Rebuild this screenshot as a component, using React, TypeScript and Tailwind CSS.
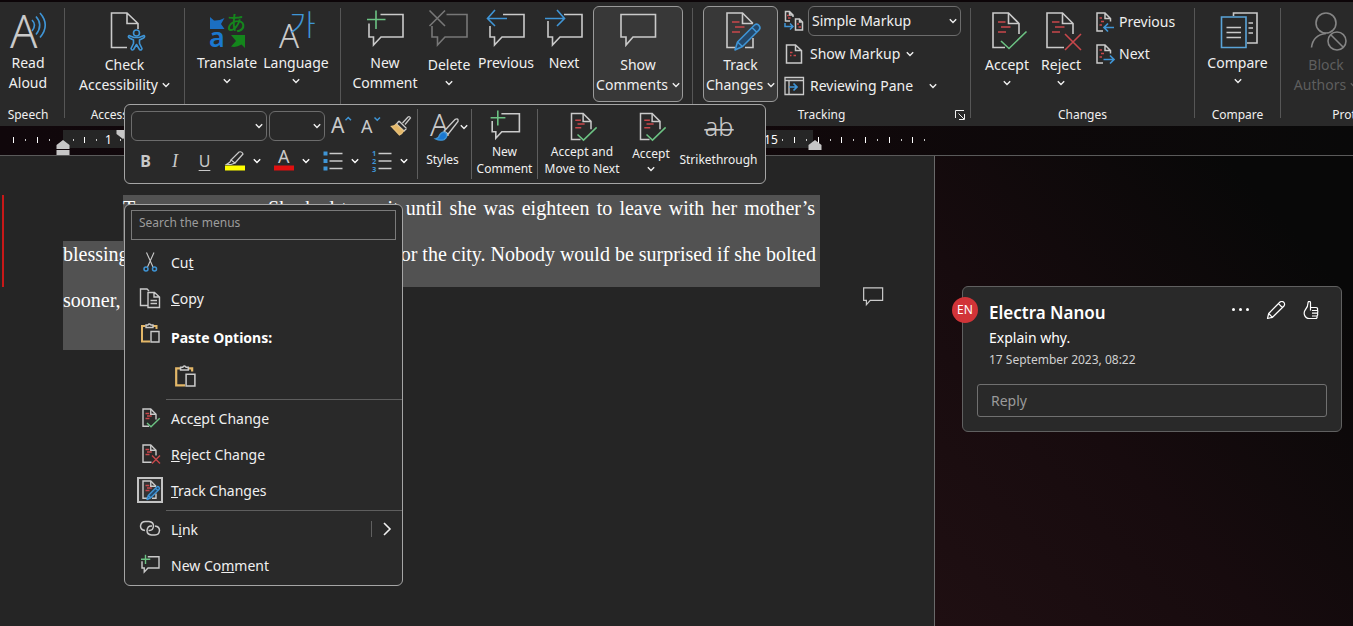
import { useState, type ReactNode } from "react";

type IconProps = { className?: string; sw?: number };

const GREY = "#cacaca";
const BLUE = "#3f95d6";
const GREEN = "#6cc283";
const RED = "#c8474b";

function Svg({ className = "size-10", children, sw = 1.6, color = GREY }: IconProps & { children: ReactNode; color?: string }) {
    return (
        <svg className={`${className} shrink-0 overflow-visible`} viewBox="0 0 40 40" fill="none" stroke={color} strokeWidth={sw} aria-hidden="true">
            {children}
        </svg>
    );
}

function Chevron({ className = "" }: { className?: string }) {
    return (
        <svg className={`h-2 w-2 shrink-0 ${className}`} viewBox="0 0 8 8" fill="none" stroke="currentColor" strokeWidth="1.4" aria-hidden="true">
            <path d="M0.8 2.3 4 5.5 7.2 2.3" />
        </svg>
    );
}

/* ---------- large ribbon icons ---------- */

function ReadAloudIcon() {
    return (
        <Svg>
            <text x="2" y="37" fontSize="45" fontWeight="300" fontFamily="Noto Sans, sans-serif" fill={GREY} stroke="none">A</text>
            <g stroke={BLUE}>
                <path d="M24 9Q29 14 24 20" />
                <path d="M28 5.500Q35.500 14 28 23.500" />
                <path d="M32 2Q42.500 14 32 26.500" />
            </g>
        </Svg>
    );
}

function AccessibilityIcon() {
    return (
        <Svg>
            <path d="M22 36.500H6.500V2H22L33 12.500V18M22 2V12.500H33" />
            <g stroke={BLUE} strokeLinejoin="round">
                <circle cx="31.500" cy="22" r="3" />
                <path d="M24 24.500Q22.500 26 24.500 27L28.500 29V32.500L26 37.500Q27 40 28.500 38.500L31.500 33.500 34.500 38.500Q36.500 40 37 37.500L34.500 32.500V29L38.500 27Q40.500 25.500 39 24.500L34 26.500H29Z" />
            </g>
        </Svg>
    );
}

function TranslateIcon() {
    return (
        <Svg>
            <g stroke="none">
                <path fill="#1b6fc2" d="M3 6 7 9.500Q12 10 17.500 7L14 13 17.500 18H3Z" />
                <text x="2" y="36" fontSize="27" fontWeight="600" fontFamily="Noto Sans, sans-serif" fill="#1b78d0">a</text>
                <text x="19" y="20" fontSize="20" fontWeight="500" fontFamily="Noto Sans CJK JP, sans-serif" fill="#14861c">あ</text>
                <path fill="#14861c" d="M24 24H38V37L34.500 33.500Q29 37 24 35.500L29 30Z" />
            </g>
        </Svg>
    );
}

function LanguageIcon() {
    return (
        <Svg>
            <g stroke="none" fontWeight="300">
                <text x="3" y="37" fontSize="33" fontFamily="Noto Sans, sans-serif" fill={GREY}>A</text>
                <text x="13" y="25" fontSize="29" fontFamily="Noto Sans CJK KR, sans-serif" fill={BLUE}>가</text>
            </g>
        </Svg>
    );
}

function NewCommentIcon(p: IconProps) {
    return (
        <Svg {...p}>
            <path d="M15.500 3.500H38V26H16L8.500 34V26H4V12.500" />
            <path stroke={GREEN} d="M11-.5V18M2 8.500H20.500" />
        </Svg>
    );
}

function DeleteCommentIcon() {
    return (
        <Svg color="#777">
            <path d="M17.500 3.500H38V26H16L8.500 34V26H3V15" />
            <path d="M.5-.5 16 15M16-.5.5 15" />
        </Svg>
    );
}

function PreviousCommentIcon() {
    return (
        <Svg>
            <path d="M17 3.500H38V26H16L8.500 34V26H4V15" />
            <path stroke={BLUE} d="M9-1 1.500 7.500 9 15M1.500 7.500H21" />
        </Svg>
    );
}

function NextCommentIcon() {
    return (
        <Svg>
            <path d="M20 3.500H38V26H16L8.500 34V26H4V10" />
            <path stroke={BLUE} d="M13-1 20.500 7.500 13 15M1 7.500H20.500" />
        </Svg>
    );
}

function CommentIcon(p: IconProps) {
    return (
        <Svg {...p}>
            <path d="M3 3.500H37.500V26H15L8 34V26H3Z" />
        </Svg>
    );
}

function MarkedPage({ open }: { open: string }) {
    return (
        <>
            <path d={open} />
            <path d="M21.500 2V12.500H32" />
            <path stroke={RED} d="M11 11H18.500M14 16H23.500M11 21H19" />
        </>
    );
}

function AcceptIcon(p: IconProps) {
    return (
        <Svg {...p}>
            <MarkedPage open="M18 36.500H6V2H21.500L32 12.500V23" />
            <path stroke={GREEN} d="M14 30 22 37.500 39.500 20.500" />
        </Svg>
    );
}

function RejectIcon(p: IconProps) {
    return (
        <Svg {...p}>
            <MarkedPage open="M23 36.500H6V2H21.500L32 12.500V23" />
            <path stroke={RED} d="M24 23 40 39M40 23 24 39" />
        </Svg>
    );
}

function TrackIcon(p: IconProps) {
    return (
        <Svg {...p}>
            <MarkedPage open="M14 36.500H6V2H21.500L32 12.500M32 27V36.500H24" />
            <path stroke={BLUE} fill="#24486a" strokeLinejoin="round" d="M14 39 16.500 31 33.500 14Q36 12 38 14.500 40 17 38 19L21.500 35.500ZM16.500 31 21.500 35.500M31 16.500 35.500 21" />
        </Svg>
    );
}

function CompareIcon() {
    return (
        <Svg>
            <path d="M15.500 5V2H39V32H29M30.500 12H35M30.500 17H35M30.500 22H35" />
            <path stroke="#5aa4d8" d="M3.500 6H28V36.500H3.500Z" />
            <path d="M8.500 16.500H23M8.500 21.500H23M8.500 26.500H23" />
        </Svg>
    );
}

function BlockIcon() {
    return (
        <Svg color="#858585">
            <circle cx="20" cy="12" r="10" />
            <path d="M5.500 36.500Q7 24 20 22.500" />
            <circle cx="31" cy="30" r="9" />
            <path d="M24.500 23.500 37.500 36.500" />
        </Svg>
    );
}

/* ---------- small icons ---------- */

function MarkupIcon() {
    return (
        <Svg className="size-5" sw={3}>
            <path d="M12 20H3V1H11L18 8V12M11 1V8H18M37 38H23V16H31L37 22ZM31 16V22H37" />
            <path stroke={RED} d="M6 9H10M8 14H13M26 26H30M29 32H34" />
            <path stroke={BLUE} d="M2 24V31H18M12 25 18 31 12 37" />
        </Svg>
    );
}

function ShowMarkupIcon() {
    return (
        <Svg className="size-5" sw={3}>
            <path d="M5 2H23L35 13V38H5ZM23 2V13H35" />
            <path stroke={RED} d="M12 17H17M19 23H24M12 23H15" />
        </Svg>
    );
}

function PaneIcon() {
    return (
        <Svg className="size-5" sw={2.6}>
            <path d="M2 3H39V37H2ZM2 9H39M10 9V37" />
            <path stroke={BLUE} strokeWidth="3.400" d="M10 22H26M19 15 26 22 19 29" />
        </Svg>
    );
}

function StepIcon({ back }: { back?: boolean }) {
    return (
        <Svg className="size-5" sw={3}>
            <path d="M16 38H4V2H20L31 13V19M20 2V13H31" />
            <path stroke={RED} d="M9 12H14M12 19H18M9 26H14" />
            <path stroke={BLUE} strokeWidth="3.400" d={back ? "M38 31H19M26 23 18 31 26 39" : "M17 31H37M30 23 38 31 30 39"} />
        </Svg>
    );
}

function CutIcon() {
    return (
        <Svg className="size-5" sw={2.2}>
            <path d="M13 1 26 30M28 1 15 30" />
            <g stroke={BLUE} strokeWidth="3">
                <circle cx="12" cy="34" r="4" />
                <circle cx="29" cy="34" r="4" />
            </g>
        </Svg>
    );
}

function CopyIcon() {
    return (
        <Svg className="size-5" sw={2.8}>
            <path d="M15 35H1V2H14L18 6M16 9H29L39 18V39H16ZM28 9V18H39M21 25H34M21 31H34" />
        </Svg>
    );
}

function PasteIcon({ className = "size-5" }: IconProps) {
    return (
        <Svg className={className} sw={2.8}>
            <path stroke="#e3b768" strokeWidth="4" d="M11 6H4V37H20M26 6H33V12" />
            <path d="M12 4H16Q18 0 22 4H26V9H12ZM22 17H38V38H22Z" />
        </Svg>
    );
}

function LinkIcon() {
    return (
        <Svg className="size-5" sw={3}>
            <path d="M10 23Q1 22 1 14 2 5 11 5H18Q27 6 27 14 26 23 19 23H17" />
            <path d="M30 14Q39 15 39 23 38 32 30 32H23Q14 31 14 23 15 14 22 14H24" />
        </Svg>
    );
}

function PainterIcon() {
    return (
        <Svg className="size-5" sw={2.6}>
            <path d="M23 14 34 2Q37 0 39 4L28 17M16 10 31 25M31 25 26 30 11 16 16 10" />
            <path fill="#e3b768" stroke="#e8c27c" d="M10 17Q7 20 1 21L17 38Q22 36 25 30Z" />
        </Svg>
    );
}

function StylesIcon() {
    return (
        <Svg className="size-7">
            <text x="0" y="33" fontSize="44" fontWeight="300" fontFamily="Noto Sans, sans-serif" fill={GREY} stroke="none">A</text>
            <path fill="#292929" strokeWidth="2" d="M20 26 36 9Q41 7 40 12L26 30Z" />
            <path fill="#1b78d0" stroke={BLUE} strokeWidth="2" d="M8 37Q13 36 14 31 18 25 23 29 26 34 20 38 14 40 8 37Z" />
        </Svg>
    );
}

function HighlightIcon() {
    return (
        <Svg className="size-5" sw={2.4}>
            <path d="M12 18 28 2Q34 0 36 6L20 24M12 18 20 24 12 27H3L10 22Z" />
            <path stroke="#ffff00" strokeWidth="10" d="M0 34H40" />
        </Svg>
    );
}

function FontColorIcon() {
    return (
        <Svg className="size-5">
            <text x="8" y="24" fontSize="36" fontFamily="Noto Sans, sans-serif" fill={GREY} stroke="none">A</text>
            <path stroke="#e01010" strokeWidth="10" d="M0 34H40" />
        </Svg>
    );
}

function ListIcon({ numbered }: { numbered?: boolean }) {
    return (
        <Svg className="size-5" sw={2.6}>
            <path d="M13 5H39M13 20H39M13 35H39" />
            {numbered ? (
                <g stroke="none" fill={BLUE} fontSize="15" fontWeight="700" fontFamily="Noto Sans, sans-serif">
                    <text x="0" y="10">1</text>
                    <text x="0" y="25">2</text>
                    <text x="0" y="41">3</text>
                </g>
            ) : (
                <path stroke={BLUE} strokeWidth="8" d="M1 5H9M1 20H9M1 35H9" />
            )}
        </Svg>
    );
}

function StrikeIcon() {
    return (
        <Svg className="size-7">
            <text x="20" y="33" textAnchor="middle" fontSize="36" fontWeight="300" fontFamily="Noto Sans, sans-serif" fill={GREY} stroke="none">ab</text>
            <path strokeWidth="2.400" d="M-1 24H41" />
        </Svg>
    );
}

/* ---------- ribbon ---------- */

type BigButtonProps = {
    icon: ReactNode;
    lines: string[];
    width: string;
    split?: boolean;
    menu?: boolean;
    pressed?: boolean;
    disabled?: boolean;
};

function BigButton({ icon, lines, width, split, menu, pressed, disabled }: BigButtonProps) {
    return (
        <button
            type="button"
            disabled={disabled}
            aria-pressed={pressed}
            className={`flex h-24 shrink-0 flex-col items-center rounded-md border pt-1 text-sm leading-5 whitespace-nowrap ${width} ${pressed ? "border-[#9a9a9a] bg-[#383838]" : "border-transparent"} ${disabled ? "text-[#5e5e5e]" : ""}`}
        >
            <span className={split ? "h-11" : "h-[42px]"}>{icon}</span>
            {lines.map((line, i) => (
                <span key={line} className="flex items-center gap-1">
                    {line}
                    {menu && i === lines.length - 1 && lines.length > 1 && <Chevron />}
                </span>
            ))}
            {menu && lines.length === 1 && <Chevron className="mt-1" />}
        </button>
    );
}

function Group({ label, width, children, launcher }: { label: string; width: string; children: ReactNode; launcher?: boolean }) {
    return (
        <>
            <section aria-label={label} className={`flex shrink-0 flex-col ${width}`}>
                <div className="flex h-24">{children}</div>
                <div className="flex h-6 items-center pt-0.5 text-xs">
                    <span className={`flex-1 text-center ${launcher ? "pr-1" : ""}`}>{label}</span>
                    {launcher && (
                        <button type="button" aria-label="Change Tracking Options" className="flex w-4 items-center">
                            <svg className="size-3" viewBox="0 0 12 12" fill="none" stroke="currentColor" aria-hidden="true">
                                <path d="M1.500 9V1.500H10M4.500 4.500 10 10M10.500 5V10.500H5" />
                            </svg>
                        </button>
                    )}
                </div>
            </section>
            <div className="mt-0.5 h-[110px] w-px shrink-0 bg-[#565656]" />
        </>
    );
}

function Ribbon() {
    return (
        <header className="flex h-[126px] overflow-hidden border-t-2 border-[#0c0508] bg-[#292929] pt-1">
            <Group label="Speech" width="w-16 pr-2">
                <BigButton icon={<ReadAloudIcon />} lines={["Read", "Aloud"]} width="w-full" />
            </Group>
            <Group label="Accessibility" width="w-[119px]">
                <BigButton icon={<AccessibilityIcon />} lines={["Check", "Accessibility"]} width="w-full" split menu />
            </Group>
            <Group label="Language" width="w-[155px] px-2">
                <BigButton icon={<TranslateIcon />} lines={["Translate"]} width="w-[68px]" menu />
                <BigButton icon={<LanguageIcon />} lines={["Language"]} width="w-[70px]" menu />
            </Group>
            <Group label="Comments" width="w-[351px] px-2">
                <BigButton icon={<NewCommentIcon />} lines={["New", "Comment"]} width="w-[72px]" />
                <BigButton icon={<DeleteCommentIcon />} lines={["Delete"]} width="w-[56px]" split menu />
                <BigButton icon={<PreviousCommentIcon />} lines={["Previous"]} width="w-[58px]" />
                <BigButton icon={<NextCommentIcon />} lines={["Next"]} width="w-[58px]" />
                <BigButton icon={<CommentIcon />} lines={["Show", "Comments"]} width="w-[90px]" split menu pressed />
            </Group>
            <Group label="Tracking" width="w-[277px]" launcher>
                <div className="pl-2.5">
                    <BigButton icon={<TrackIcon />} lines={["Track", "Changes"]} width="w-[75px]" split menu pressed />
                </div>
                <div className="flex flex-1 flex-col pr-[9px] pl-1.5 text-sm">
                    <label className="flex h-8 items-start gap-1">
                        <span className="flex h-[30px] items-center"><MarkupIcon /></span>
                        <span className="relative flex-1">
                            <select aria-label="Display for Review" className="h-[30px] w-full appearance-none rounded-md border border-[#6c6c6c] bg-[#292929] pl-[3px]">
                                <option>Simple Markup</option>
                            </select>
                            <Chevron className="pointer-events-none absolute top-[11px] right-1" />
                        </span>
                    </label>
                    <button type="button" className="flex h-8 items-center gap-1.5">
                        <ShowMarkupIcon />
                        Show Markup
                        <Chevron />
                    </button>
                    <button type="button" className="flex h-8 items-center gap-1.5">
                        <PaneIcon />
                        Reviewing Pane
                        <Chevron className="ml-2.5" />
                    </button>
                </div>
            </Group>
            <Group label="Changes" width="w-[223px]">
                <div className="flex pl-[9px]">
                    <BigButton icon={<AcceptIcon />} lines={["Accept"]} width="w-[54px]" split menu />
                    <BigButton icon={<RejectIcon />} lines={["Reject"]} width="w-[54px]" split menu />
                </div>
                <div className="flex flex-col pl-[7px] text-sm">
                    <button type="button" className="flex h-8 items-center gap-1"><StepIcon back />Previous</button>
                    <button type="button" className="flex h-8 items-center gap-1"><StepIcon />Next</button>
                </div>
            </Group>
            <Group label="Compare" width="w-[85px]">
                <BigButton icon={<CompareIcon />} lines={["Compare"]} width="w-full" menu />
            </Group>
            <Group label="Protect" width="w-[143px]">
                <BigButton icon={<BlockIcon />} lines={["Block", "Authors"]} width="w-[90px]" split menu disabled />
            </Group>
        </header>
    );
}

/* ---------- ruler ---------- */

function Tick({ index }: { index: number }) {
    const cm = index / 4;
    if (index === 0) return null;
    if (cm === 1 || cm === 15) return <span className="text-xs text-white">{cm}</span>;
    return <span className={index % 2 === 0 ? "h-1.5 w-px bg-white" : "h-0.5 w-px bg-[#c8c8c8]"} />;
}

function Ruler() {
    const ticks = Array.from({ length: 78 }, (_, i) => i - 4);
    return (
        <div className="relative h-[30px] overflow-hidden border-b border-[#5a5a5a] bg-linear-to-r from-[#10070b] via-[#12080b] to-[#090909] pt-1">
            <div className="flex h-[18px]">
                <div className="w-[63px]" />
                <div className="w-[750px] bg-[#262626]" />
            </div>
            <div className="absolute top-1 left-2 flex h-[20px] w-[922px] items-center">
                {ticks.map((i) => (
                    <span key={i} className="flex w-0 flex-1 items-center justify-center"><Tick index={i} /></span>
                ))}
            </div>
            <svg className="absolute top-3.5 left-[56px] h-4 w-3.5" viewBox="0 0 14 16" fill="#c6c6c6" aria-hidden="true">
                <path d="M.5 5 7 0 13.500 5V9H.5ZM.5 10H13.500V15H.5Z" />
            </svg>
            <svg className="absolute top-1 left-[116px] h-2.5 w-3.5" viewBox="0 0 14 10" fill="#c6c6c6" aria-hidden="true">
                <path d="M.5 0H13.500V4L7 9 .5 4Z" />
            </svg>
            <svg className="absolute top-3.5 left-[808px] h-2.5 w-3.5" viewBox="0 0 14 10" fill="#c6c6c6" aria-hidden="true">
                <path d="M.5 5 7 0 13.500 5V10H.5Z" />
            </svg>
        </div>
    );
}

/* ---------- document and comments ---------- */

function DocumentPane() {
    return (
        <main className="flex flex-1 items-start overflow-hidden border-r border-[#6a6a6a] bg-[#252525] pt-[39px]">
            <div className="ml-0.5 h-[92px] w-0.5 shrink-0 bg-[#c81818]" />
            <div className="ml-[59px] w-[757px] shrink-0 font-['Liberation_Serif',serif] text-[20px] leading-[26px] whitespace-nowrap text-white">
                <p className="ml-[60px] h-[46px] bg-[#525252] pr-[5px] [text-align-last:justify]">
                    Two more years. She had to wait until she was eighteen to leave with her mother’s
                </p>
                <p className="h-[46px] bg-[#525252] pr-[5px] [text-align-last:justify]">
                    blessing and then make her own way out for the city. Nobody would be surprised if she bolted
                </p>
                <p className="h-[63px] w-[140px] bg-[#525252]">sooner, though.</p>
            </div>
            <button type="button" aria-label="Show comment" className="mt-[91px] ml-[42px]">
                <CommentIcon className="size-[22px]" sw={2.2} />
            </button>
        </main>
    );
}

function CommentsPane() {
    const [reply, setReply] = useState("");
    return (
        <aside className="w-[418px] shrink-0 bg-linear-to-bl from-[#080808] from-15% via-[#170b0e] via-60% to-[#1f0f12] pt-[130px] pr-[11px] pl-[27px]">
            <article className="relative rounded-md border border-[#606060] bg-[#292929] px-3.5 pt-3.5 pb-3.5">
                <span className="absolute top-2.5 -left-[11px] flex size-[26px] items-center justify-center rounded-full bg-[#d13438] text-xs text-white">EN</span>
                <div className="flex items-start justify-between pl-3">
                    <h2 className="text-[17px] leading-6 font-semibold text-white">Electra Nanou</h2>
                    <div className="flex items-center gap-[15px] pr-1.5 text-white">
                        <button type="button" aria-label="More actions">
                            <svg className="size-5" viewBox="0 0 20 20" fill="currentColor" aria-hidden="true">
                                <circle cx="2.500" cy="8.500" r="1.500" /><circle cx="9.500" cy="8.500" r="1.500" /><circle cx="16.500" cy="8.500" r="1.500" />
                            </svg>
                        </button>
                        <button type="button" aria-label="Edit comment">
                            <svg className="size-5" viewBox="0 0 20 20" fill="none" stroke="currentColor" strokeWidth="1.200" strokeLinejoin="round" aria-hidden="true">
                                <path d="M1.500 17.500 2.700 12.500 14 1Q16-.2 17.700 1.200 19.300 3 18 5L6.500 16.300ZM12.500 2.700 16.300 6.500M2.700 12.500 6.500 16.300" />
                            </svg>
                        </button>
                        <button type="button" aria-label="Like comment">
                            <svg className="size-5" viewBox="0 0 20 20" fill="none" stroke="currentColor" strokeWidth="1.200" strokeLinejoin="round" aria-hidden="true">
                                <path d="M9.500 6V2Q9.500.3 8.200.3 7 .3 7 2 7 5.500 4.500 8.500 2.500 11 3.500 14 4.700 17.500 8.500 17.500H14.500Q16.500 17.500 16 15 17.100 14 16.500 12.200 17.100 10.500 16.500 9 17 6.500 15 6.500H9.500ZM9.500 6V9.500M11 9.500H16.500M11 12.200H16.500M11 15H16" />
                            </svg>
                        </button>
                    </div>
                </div>
                <p className="pt-px pl-3 text-sm leading-6 text-white">Explain why.</p>
                <p className="pl-3 text-xs leading-5 text-[#d0d0d0]">17 September 2023, 08:22</p>
                <input
                    aria-label="Reply"
                    placeholder="Reply"
                    value={reply}
                    onChange={(e) => setReply(e.target.value)}
                    className="mt-3.5 block h-[33px] w-full rounded-[3px] border border-[#707070] bg-transparent pl-[13px] text-sm text-white placeholder:text-[#9a9a9a]"
                />
            </article>
        </aside>
    );
}

/* ---------- floating mini toolbar ---------- */

function MiniSelect({ label, width }: { label: string; width: string }) {
    return (
        <span className={`relative shrink-0 ${width}`}>
            <select aria-label={label} className="h-[30px] w-full appearance-none rounded-md border border-[#6c6c6c] bg-[#292929]">
                <option value=""></option>
            </select>
            <Chevron className="pointer-events-none absolute top-[11px] right-1" />
        </span>
    );
}

function GrowFont({ shrink }: { shrink?: boolean }) {
    return (
        <Svg className="size-5">
            <text x="0" y="34" fontSize={shrink ? 36 : 42} fontWeight="400" fontFamily="Noto Sans, sans-serif" fill={GREY} stroke="none">A</text>
            <path stroke={BLUE} strokeWidth="3" d={shrink ? "M27 3 32.500 8.500 38 3" : "M29 8.500 34.500 3 40 8.500"} />
        </Svg>
    );
}

function MiniButton({ icon, lines, width, menu }: { icon: ReactNode; lines: string[]; width: string; menu?: boolean }) {
    return (
        <button type="button" className={`flex h-full flex-col items-center pt-1.5 text-xs leading-[17px] whitespace-nowrap ${width}`}>
            <span className="flex h-8 items-center">{icon}</span>
            <span className={`flex flex-1 flex-col items-center ${lines.length > 1 ? "" : menu ? "pt-0.5" : "pt-2"}`}>
                {lines.map((l) => <span key={l}>{l}</span>)}
                {menu && <Chevron className="mt-[3px]" />}
            </span>
        </button>
    );
}

function MiniToolbar() {
    const bar = <div className="h-[70px] w-px shrink-0 bg-[#5e5e5e]" />;
    return (
        <div role="toolbar" aria-label="Formatting" className="absolute top-[104px] left-[124px] flex h-20 w-[642px] items-center rounded-md border border-[#a5a5a5] bg-[#292929]">
            <div className="flex h-full w-[292px] flex-col px-1.5 pt-1.5 pb-0.5">
                <div className="flex h-[30px] items-center">
                    <MiniSelect label="Font" width="w-[136px]" />
                    <MiniSelect label="Font Size" width="ml-0.5 w-[56px]" />
                    <div className="ml-1.5 flex gap-2.5">
                        <button type="button" aria-label="Grow Font"><GrowFont /></button>
                        <button type="button" aria-label="Shrink Font"><GrowFont shrink /></button>
                        <button type="button" aria-label="Format Painter"><PainterIcon /></button>
                    </div>
                </div>
                <div className="flex flex-1 items-center text-base text-[#c8c8c8]">
                    <button type="button" className="w-[29px] font-bold">B</button>
                    <button type="button" className="w-[30px] font-['Liberation_Serif',serif] text-lg italic">I</button>
                    <button type="button" className="w-[29px] underline underline-offset-3">U</button>
                    <div className="ml-1.5 flex flex-1 items-center justify-between pr-[3px] text-white">
                        <button type="button" aria-label="Highlight" className="flex items-center gap-2"><HighlightIcon /><Chevron /></button>
                        <button type="button" aria-label="Font Color" className="flex items-center gap-2"><FontColorIcon /><Chevron /></button>
                        <button type="button" aria-label="Bullets" className="flex items-center gap-2"><ListIcon /><Chevron /></button>
                        <button type="button" aria-label="Numbering" className="flex items-center gap-2"><ListIcon numbered /><Chevron /></button>
                    </div>
                </div>
            </div>
            {bar}
            <MiniButton icon={<span className="flex items-center gap-0.5 pl-3"><StylesIcon /><Chevron /></span>} lines={["Styles"]} width="w-[53px] pr-1" />
            {bar}
            <MiniButton icon={<NewCommentIcon className="size-8" sw={2} />} lines={["New", "Comment"]} width="w-[65px]" />
            {bar}
            <MiniButton icon={<AcceptIcon className="size-[30px]" sw={2} />} lines={["Accept and", "Move to Next"]} width="w-[88px]" />
            <MiniButton icon={<AcceptIcon className="size-[30px]" sw={2} />} lines={["Accept"]} width="w-[50px]" menu />
            <MiniButton icon={<StrikeIcon />} lines={["Strikethrough"]} width="flex-1 pr-1" />
        </div>
    );
}

/* ---------- context menu ---------- */

function MenuItem({ icon, children, boxed, sub }: { icon: ReactNode; children: ReactNode; boxed?: boolean; sub?: boolean }) {
    return (
        <li role="none">
            <button type="button" role="menuitem" className="flex h-9 w-full items-center pr-2.5 pl-3 text-sm">
                <span className={`flex size-[26px] items-center justify-center ${boxed ? "border-2 border-[#c4c4c4] bg-[#333]" : ""}`}>{icon}</span>
                <span className="ml-2 pt-0.5">{children}</span>
                {sub && (
                    <span className="ml-auto flex items-center gap-2.5">
                        <span className="h-4 w-px bg-[#606060]" />
                        <svg className="h-3.5 w-2.5" viewBox="0 0 10 14" fill="none" stroke="currentColor" strokeWidth="1.600" aria-hidden="true">
                            <path d="M2 1 8 7 2 13" />
                        </svg>
                    </span>
                )}
            </button>
        </li>
    );
}

function ContextMenu() {
    return (
        <div className="absolute top-[204px] left-[124px] w-[279px] rounded-md border border-[#a5a5a5] bg-[#292929] pt-[5px] pb-0.5">
            <input aria-label="Search the menus" placeholder="Search the menus" className="mx-1.5 mb-1 block h-[30px] w-[265px] border border-[#7a7a7a] bg-transparent px-[7px] pb-1.5 text-xs placeholder:text-[#9c9c9c]" />
            <ul role="menu">
                <MenuItem icon={<CutIcon />}>Cu<u>t</u></MenuItem>
                <MenuItem icon={<CopyIcon />}><u>C</u>opy</MenuItem>
                <li role="none" className="flex h-[42px] items-center pl-3 text-sm font-bold text-white">
                    <span className="flex h-full w-[26px] justify-center pt-[7px]"><PasteIcon /></span>
                    <span className="ml-2 pt-0.5">Paste Options:</span>
                </li>
                <li role="none" className="flex h-9 items-center pl-[49px]">
                    <button type="button" role="menuitem" aria-label="Paste"><PasteIcon className="size-[22px]" /></button>
                </li>
                <li role="separator" className="mt-[5px] ml-[41px] h-px bg-[#5e5e5e]" />
                <MenuItem icon={<AcceptIcon className="size-5" sw={2.8} />}>Acc<u>e</u>pt Change</MenuItem>
                <MenuItem icon={<RejectIcon className="size-5" sw={2.8} />}><u>R</u>eject Change</MenuItem>
                <MenuItem icon={<TrackIcon className="size-5" sw={2.8} />} boxed><u>T</u>rack Changes</MenuItem>
                <li role="separator" className="mt-0.5 ml-[41px] h-px bg-[#5e5e5e]" />
                <MenuItem icon={<LinkIcon />} sub>L<u>i</u>nk</MenuItem>
                <MenuItem icon={<NewCommentIcon className="size-5" sw={2.8} />}>New Co<u>m</u>ment</MenuItem>
            </ul>
        </div>
    );
}

export default function App() {
    return (
        <div className="relative flex min-h-screen flex-col overflow-hidden bg-[#0c080a] font-['Noto_Sans',sans-serif] text-[#f0f0f0]">
            <Ribbon />
            <Ruler />
            <div className="flex flex-1">
                <DocumentPane />
                <CommentsPane />
            </div>
            <MiniToolbar />
            <ContextMenu />
        </div>
    );
}
